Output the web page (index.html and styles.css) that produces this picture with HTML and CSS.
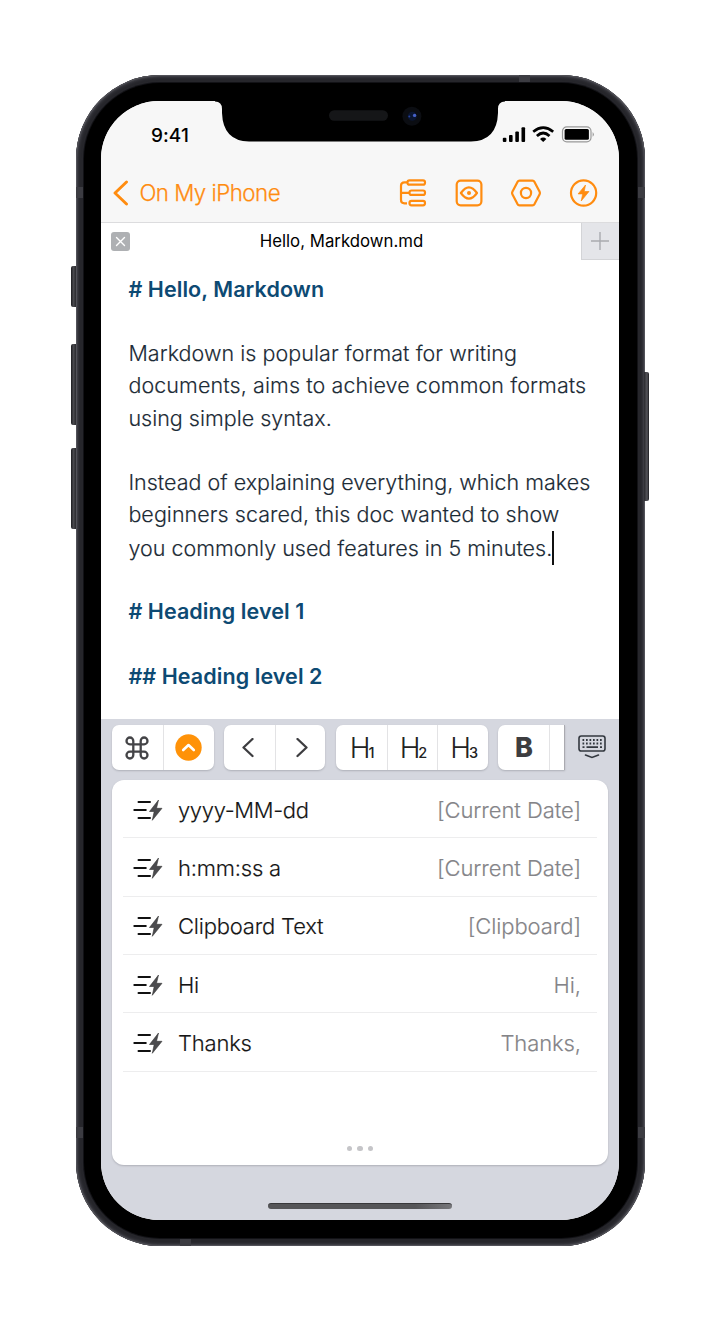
FILE: index.html
```html
<!DOCTYPE html>
<html lang="en">
<head>
<meta charset="utf-8">
<title>Hello, Markdown.md</title>
<link rel="stylesheet" href="styles.css">
</head>
<body>
<svg class="defs" width="0" height="0">
  <symbol id="snippet" viewBox="0 0 30 24">
    <path d="M5.500 4h11.500M1.300 12h11.500M5.500 20h11.500" fill="none" stroke="#111" stroke-width="2" stroke-linecap="round"/>
    <path d="M25.500 2L16.500 13.500h4.700L19.300 22.300L29 10.300h-5.500z" fill="#4b4b4e" stroke="#333" stroke-width=".6" stroke-linejoin="round"/>
  </symbol>
</svg>
<div class="phone">
  <i class="key mute"></i><i class="key vol-up"></i><i class="key vol-down"></i><i class="key power"></i>
  <i class="band b1"></i><i class="band b2"></i><i class="band b3"></i><i class="band b4"></i><i class="band b5"></i><i class="band b6"></i>
  <div class="bezel">
    <div class="screen">
      <header class="top">
        <div class="status">
          <span class="time">9:41</span>
          <svg width="92" height="18" viewBox="0 0 92 18">
            <rect x=".8" y="11.800" width="3.600" height="4.200" rx="1"/><rect x="7" y="9" width="3.600" height="7" rx="1"/><rect x="13.300" y="5.500" width="3.600" height="10.500" rx="1"/><rect x="19.500" y="1.300" width="3.600" height="14.700" rx="1"/>
            <g fill="none" stroke="#000" stroke-width="2.700"><path d="M31.200 5.700Q41.200 -2.300 51.200 5.700"/><path d="M34.900 10Q41.200 4 47.500 10"/></g>
            <path d="M38 12.900Q41.200 10 44.400 12.900L41.200 16z"/>
            <rect x="60.500" y=".9" width="28.500" height="15" rx="4.300" fill="none" stroke="#999" stroke-width="1.200"/>
            <rect x="62.600" y="3" width="24.300" height="10.800" rx="1.500"/><path d="M90.600 6q2.600 2.400 0 4.800z" fill="#999"/>
          </svg>
        </div>
        <nav class="nav">
          <svg class="back" width="16" height="26" viewBox="0 0 16 26"><path d="M13.500 2L2 13L13.500 24" fill="none" stroke="#ff8c10" stroke-width="2.900" stroke-linecap="round" stroke-linejoin="round"/></svg>
          <span class="backlabel">On My iPhone</span>
          <svg class="actions" width="200" height="30" viewBox="0 0 200 30" fill="none" stroke="#ff8c10" stroke-width="2.200" stroke-linejoin="round">
            <path d="M9 4.300H6.500Q3 4.300 3 7.800V22Q3 25.300 6.500 25.300H9M3 14.800H11"/>
            <rect x="9.500" y="2.300" width="17.500" height="4.400" rx="2"/><rect x="11.500" y="12.500" width="15.500" height="4.400" rx="2"/><rect x="11.500" y="22.900" width="15.500" height="4.400" rx="2"/>
            <rect x="58.700" y="2.600" width="24.700" height="24.700" rx="4"/>
            <path d="M62.900 15Q70.900 3.700 79 15Q70.900 26.300 62.900 15z"/><circle cx="71" cy="15" r="2" fill="#ff8c10" stroke="none"/>
            <path d="M121.500 2.700h13q1.300 0 2 1.200l5 9.500q.9 1.600 0 3.200l-5 9.500q-.7 1.200-2 1.200h-13q-1.300 0-2-1.200l-5-9.500q-.9-1.600 0-3.200l5-9.500q.7-1.200 2-1.200z"/><circle cx="128" cy="15" r="5.100"/>
            <circle cx="185.600" cy="15" r="12.600"/><path d="M187.500 7L180.100 15.900h4.600L183.200 23L191 13.500h-4.800z" fill="#ff8c10" stroke-width=".7"/>
          </svg>
        </nav>
      </header>
      <div class="tabs">
        <svg class="close" width="19" height="19" viewBox="0 0 19 19"><rect width="19" height="19" rx="3" fill="#aeb0b3"/><path d="M5.500 5.500l8 8M13.500 5.500l-8 8" stroke="#fff" stroke-width="1.400" stroke-linecap="round"/></svg>
        <span class="filename">Hello, Markdown.md</span>
        <div class="add"><svg width="18" height="18" viewBox="0 0 18 18"><path d="M9 0v18M0 9h18" stroke="#a9abaf" stroke-width="1.400"/></svg></div>
      </div>
      <main class="editor">
        <p class="h"># Hello, Markdown</p><p></p>
        <p class="wide">Markdown is popular format for writing</p>
        <p class="wider">documents, aims to achieve common formats</p>
        <p>using simple syntax.</p><p></p>
        <p>Instead of explaining everything, which makes</p>
        <p class="wide">beginners scared, this doc wanted to show</p>
        <p>you commonly used features in 5 minutes.<i class="caret"></i></p><p></p>
        <p class="h"># Heading level 1</p><p></p>
        <p class="h">## Heading level 2</p>
      </main>
      <section class="keyboard">
        <div class="toolbar">
          <div class="group">
            <div class="btn"><svg width="24" height="24" viewBox="0 0 24 24" fill="none" stroke="#444447" stroke-width="2.300"><path d="M8.300 8.300H4.900A3.400 3.400 0 1 1 8.300 4.900V19.100A3.400 3.400 0 1 1 4.900 15.700H19.100A3.400 3.400 0 1 1 15.700 19.100V4.900A3.400 3.400 0 1 1 19.100 8.300z"/></svg></div>
            <div class="btn"><svg width="28" height="28" viewBox="0 0 28 28"><circle cx="13.500" cy="13.500" r="13.200" fill="#ff9208"/><path d="M8.200 16L13.500 11L18.800 16" fill="none" stroke="#fff" stroke-width="2.600" stroke-linecap="round" stroke-linejoin="round"/></svg></div>
          </div>
          <div class="group">
            <div class="btn"><svg width="14" height="20" viewBox="0 0 14 20"><path d="M10.500 1L1.500 9.500L10.500 18" class="chev"/></svg></div>
            <div class="btn"><svg width="14" height="20" viewBox="0 0 14 20"><path d="M3.500 1L12.500 9.500L3.500 18" class="chev"/></svg></div>
          </div>
          <div class="group">
            <div class="btn head"><span>H</span><small>1</small></div><div class="btn head"><span>H</span><small>2</small></div><div class="btn head"><span>H</span><small>3</small></div>
          </div>
          <div class="group cut"><div class="btn bold">B</div><div class="btn stub"></div></div>
          <svg class="hide" width="28" height="26" viewBox="0 0 28 26" fill="none" stroke="#33383f">
            <rect x="1" y="2" width="26" height="15" rx="2.300" stroke-width="1.600"/>
            <path d="M4.500 6H24M4.500 9.500H24" stroke-width="1.800" stroke-dasharray="1.700 1.800"/><path d="M4.500 13.200h2M22 13.200h2M8.500 13.200h11.500" stroke-width="1.700"/>
            <path d="M7.500 21L14 23.500L20.500 21" stroke-width="1.600" stroke-linecap="round"/>
          </svg>
        </div>
        <div class="panel">
          <div class="row"><svg><use href="#snippet"/></svg><span class="tight">yyyy-MM-dd</span><em>[Current Date]</em></div>
          <div class="row"><svg><use href="#snippet"/></svg><span>h:mm:ss a</span><em>[Current Date]</em></div>
          <div class="row"><svg><use href="#snippet"/></svg><span>Clipboard Text</span><em>[Clipboard]</em></div>
          <div class="row"><svg><use href="#snippet"/></svg><span>Hi</span><em>Hi,</em></div>
          <div class="row"><svg><use href="#snippet"/></svg><span>Thanks</span><em>Thanks,</em></div>
          <div class="dots"><b></b><b></b><b></b></div>
        </div>
        <div class="home"></div>
      </section>
      <svg class="notch" width="290" height="42" viewBox="0 0 290 42"><path d="M0 0H290V.5Q283 .5 283 8V12Q282 40 256 40.500H34Q8 40 7 12V8Q7 .5 0 .5z" fill="#000"/><rect x="114" y="9.300" width="59" height="10.500" rx="5.200" fill="#151618"/><circle cx="196.900" cy="15.200" r="9.500" fill="#0b0d12"/><circle cx="197.300" cy="15.200" r="4.500" fill="#0a1530"/><circle cx="199.600" cy="14.400" r="1.700" fill="#4661c8"/><circle cx="194.300" cy="15.400" r="1" fill="#26419c"/></svg>
    </div>
  </div>
</div>
</body>
</html>
```
FILE: styles.css
```css
* { box-sizing: border-box; }
body { margin: 0; height: 1322px; background: #fff; font-family: Inter, "Liberation Sans", sans-serif; overflow: hidden; }
.defs { position: absolute; }
p { margin: 0; }
i, em { font-style: normal; }
.phone { position: relative; width: 568.500px; height: 1171px; margin: 75px 0 0 76px; padding: 8px; border-radius: 84px; background: #2b2b31; box-shadow: inset 0 0 1px 1px #55555b, inset 0 0 3px 2px #45454c, inset 0 0 0 7px #26262b; }
.bezel { height: 100%; padding: 18px 18px 18px 17.400px; border-radius: 76px; background: #000; box-shadow: 0 0 0 1px #121216; }
.screen { position: relative; display: flex; flex-direction: column; height: 1119px; border-radius: 58px; overflow: hidden; background: #fff; }
.key { position: absolute; left: -5px; width: 5px; border-radius: 2px 0 0 2px; background: linear-gradient(90deg, #1c1c20, #49494e 50%, #29292d); }
.mute { top: 191px; height: 41px; }
.vol-up { top: 269px; height: 81px; }
.vol-down { top: 373px; height: 81px; }
.power { left: auto; right: -4px; top: 297px; height: 129px; border-radius: 0 2px 2px 0; background: linear-gradient(90deg, #29292d, #55555b 60%, #1c1c20); }
.band { position: absolute; width: 7px; height: 11px; background: #3c3c42; }
.b1 { left: 0; top: 112px; }
.b2 { right: 0; top: 112px; }
.b3 { left: 0; bottom: 108px; }
.b4 { right: 0; bottom: 108px; }
.b5 { width: 11px; height: 7px; right: 115px; top: 0; }
.b6 { width: 11px; height: 7px; left: 104px; bottom: 0; }

.top { height: 122px; background: #f7f7f7; border-bottom: 1px solid #dcdcde; }
.status { display: flex; justify-content: space-between; align-items: center; height: 66px; padding: 0 25px 0 49.500px; }
.status svg { margin-top: 1px; }
.time { font-size: 19px; font-weight: 500; letter-spacing: .1px; padding-top: 2px; }
.nav { display: flex; align-items: center; height: 52px; padding: 0 21px 0 11.500px; color: #ff8c10; }
.backlabel { margin: -1px 0 0 10.500px; font-size: 22.300px; font-weight: 300; letter-spacing: -.5px; -webkit-text-stroke: .25px #ff8c10; }
.actions { margin-left: auto; }
.tabs { display: flex; align-items: center; height: 37px; padding-left: 9.600px; }
.filename { flex: 1; text-align: center; font-size: 16.800px; padding: 0 28px 2px 0; }
.add { display: flex; align-items: center; justify-content: center; width: 37.500px; height: 37px; background: #e4e5e9; border-left: 1px solid #d3d4d7; border-bottom: 1px solid #d3d4d7; }
.editor { height: 459px; padding: 12.600px 0 0 27px; color: #1c2b36; font-size: 21.500px; font-weight: 300; -webkit-text-stroke: .15px; }
.editor p { height: 32.280px; line-height: 32.280px; white-space: nowrap; }
.editor .h { color: #0d4a73; font-weight: 600; letter-spacing: .08px; -webkit-text-stroke: 0; }
.editor .wide { letter-spacing: .04px; }
.editor .wider { letter-spacing: .09px; }
.caret { display: inline-block; width: 2px; height: 34px; margin-left: 0; vertical-align: -9px; background: #111; }

.keyboard { flex: 1; background: #d5d7df; padding-top: 6px; }
.toolbar { position: relative; display: flex; height: 45px; padding-left: 10.600px; gap: 10.300px; }
.group { display: flex; border-radius: 7px; background: #fff; box-shadow: 0 1px 2px #aeb0b8; }
.btn { display: flex; align-items: center; justify-content: center; width: 50.800px; }
.btn + .btn { border-left: 1px solid #e3e3e5; }
.chev { fill: none; stroke: #3d3d40; stroke-width: 2.300; stroke-linecap: round; stroke-linejoin: round; }
.head { color: #222; font-size: 28px; font-weight: 300; padding-left: 2px; }
.head span { letter-spacing: -2px; }
.head small { font-size: 14.500px; font-weight: 500; padding-top: 10px; }
.bold { font-size: 27px; font-weight: 800; color: #3d3d40; }
.cut { border-radius: 7px 0 0 7px; }
.cut .stub { width: 16px; border-right: 1px solid #aaaab0; }
.hide { margin: 9px 0 0 2.500px; }
.panel { display: flex; flex-direction: column; width: 496px; height: 385px; margin: 10px 0 0 10.600px; border-radius: 12px; background: #fff; box-shadow: 0 1px 2px #aeb0b8; }
.row { display: flex; align-items: center; height: 58.350px; margin: 0 11px; padding: 2px 16px 0 10px; border-bottom: 1px solid #ededee; font-size: 22px; font-weight: 300; color: #151515; letter-spacing: -.2px; -webkit-text-stroke: .15px; }
.row svg { width: 30px; height: 24px; margin-right: 15px; }
.row .tight { letter-spacing: -.35px; }
.row em { margin-left: auto; color: #848488; letter-spacing: -.08px; }
.dots { display: flex; justify-content: center; gap: 5px; margin-top: 74px; }
.dots b { width: 5.500px; height: 5.500px; border-radius: 50%; background: #c5c5c8; }
.home { width: 184px; height: 6px; margin: 38px 0 0 166.500px; border-radius: 3px; background: linear-gradient(90deg, #555558 80%, #77777b); border-top: 1px solid #38383b; }
.notch { position: absolute; left: 114px; top: 0; }
```
